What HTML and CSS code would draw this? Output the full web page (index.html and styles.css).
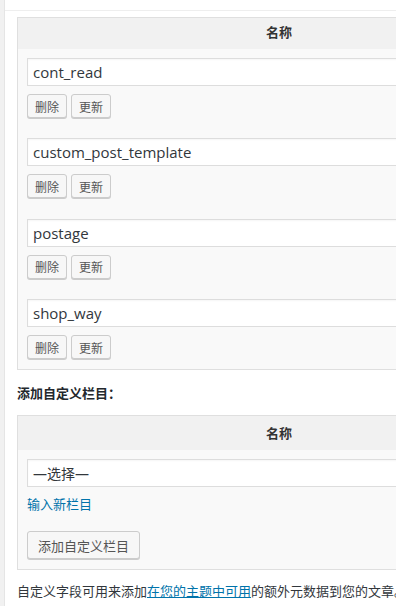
FILE: index.html
```html
<!DOCTYPE html>
<html lang="zh-CN">
<head>
<meta charset="UTF-8">
<meta name="viewport" content="width=device-width, initial-scale=1.0">
<title>自定义栏目</title>
<link rel="stylesheet" href="styles.css">
</head>
<body>

<div class="postbox">
    <div class="postbox-top"></div>

    <div class="inside">
        <div class="meta-table">
            <div class="meta-head head-short">名称</div>
            <div class="meta-body">
                <div class="meta-row">
                    <input type="text" class="field" value="cont_read">
                    <div class="row-actions">
                        <button class="btn-small">删除</button>
                        <button class="btn-small">更新</button>
                    </div>
                </div>
                <div class="meta-row">
                    <input type="text" class="field" value="custom_post_template">
                    <div class="row-actions">
                        <button class="btn-small">删除</button>
                        <button class="btn-small">更新</button>
                    </div>
                </div>
                <div class="meta-row">
                    <input type="text" class="field" value="postage">
                    <div class="row-actions">
                        <button class="btn-small">删除</button>
                        <button class="btn-small">更新</button>
                    </div>
                </div>
                <div class="meta-row">
                    <input type="text" class="field" value="shop_way">
                    <div class="row-actions">
                        <button class="btn-small">删除</button>
                        <button class="btn-small">更新</button>
                    </div>
                </div>
            </div>
        </div>

        <p class="add-title">添加自定义栏目：</p>

        <div class="meta-table">
            <div class="meta-head">名称</div>
            <div class="meta-body">
                <div class="field select"><span class="dash">—</span>选择<span class="dash">—</span></div>
                <a href="#" class="new-link">输入新栏目</a>
                <button class="btn">添加自定义栏目</button>
            </div>
        </div>

        <p class="note">自定义字段可用来添加<a href="#">在您的主题中可用</a>的额外元数据到您的文章。</p>
    </div>
</div>

</body>
</html>
```

FILE: styles.css
```css
* { margin: 0; padding: 0; box-sizing: border-box; }
body { background: #f1f1f1; color: #32373c; font-family: "Noto Sans", "Noto Sans CJK SC", sans-serif; font-size: 13px; overflow: hidden; height: 606px; }

.postbox { margin-left: 4px; border-left: 1px solid #e5e5e5; background: #fff; min-height: 606px; }
.postbox-top { height: 11px; border-bottom: 1px solid #eee; }
.inside { padding: 6px 0 0 12px; }

.meta-table { width: 524px; border: 1px solid #dfdfdf; background: #f9f9f9; }
.meta-head { background: #f1f1f1; height: 34px; line-height: 34px; text-align: center; font-weight: bold; font-size: 13px; color: #333; }
.meta-head.head-short { height: 31px; line-height: 29px; }
.meta-body { padding: 9px 9px 10px; display: flex; flex-direction: column; align-items: flex-start; }

.meta-row { width: 100%; display: flex; flex-direction: column; gap: 8px; }
.meta-row + .meta-row { margin-top: 20.4px; }
.row-actions { display: flex; gap: 4px; }

.field { width: 100%; height: 28px; border: 1px solid #ddd; background: #fff; padding: 0 5px; font-family: "Open Sans", "Noto Sans CJK SC", sans-serif; font-size: 15px; color: #32373c; box-shadow: inset 0 1px 2px rgba(0,0,0,0.04); outline: none; }
.select { display: flex; align-items: center; font-family: "Noto Sans CJK SC", sans-serif; font-size: 14px; }
.select .dash { font-family: "Noto Sans", sans-serif; }

.btn-small, .btn { background: #f7f7f7; border: 1px solid #ccc; border-radius: 3px; color: #555; box-shadow: 0 1px 0 #ccc; font-family: "Noto Sans CJK SC", sans-serif; }
.btn-small { height: 24px; padding: 0 7px; font-size: 12px; }
.btn { height: 28px; padding: 0 10px; font-size: 13px; margin-top: 17px; }

.new-link { color: #0073aa; text-decoration: none; font-family: "Noto Sans CJK SC", sans-serif; font-size: 13px; line-height: 20px; margin-top: 7px; }

.add-title { font-weight: bold; font-size: 13px; line-height: 20px; margin: 13px 0 12px; color: #23282d; font-family: "Noto Sans CJK SC", sans-serif; }

.note { margin-top: 11px; line-height: 20px; white-space: nowrap; font-family: "Noto Sans CJK SC", sans-serif; color: #32373c; }
.note a { color: #0073aa; }
```
